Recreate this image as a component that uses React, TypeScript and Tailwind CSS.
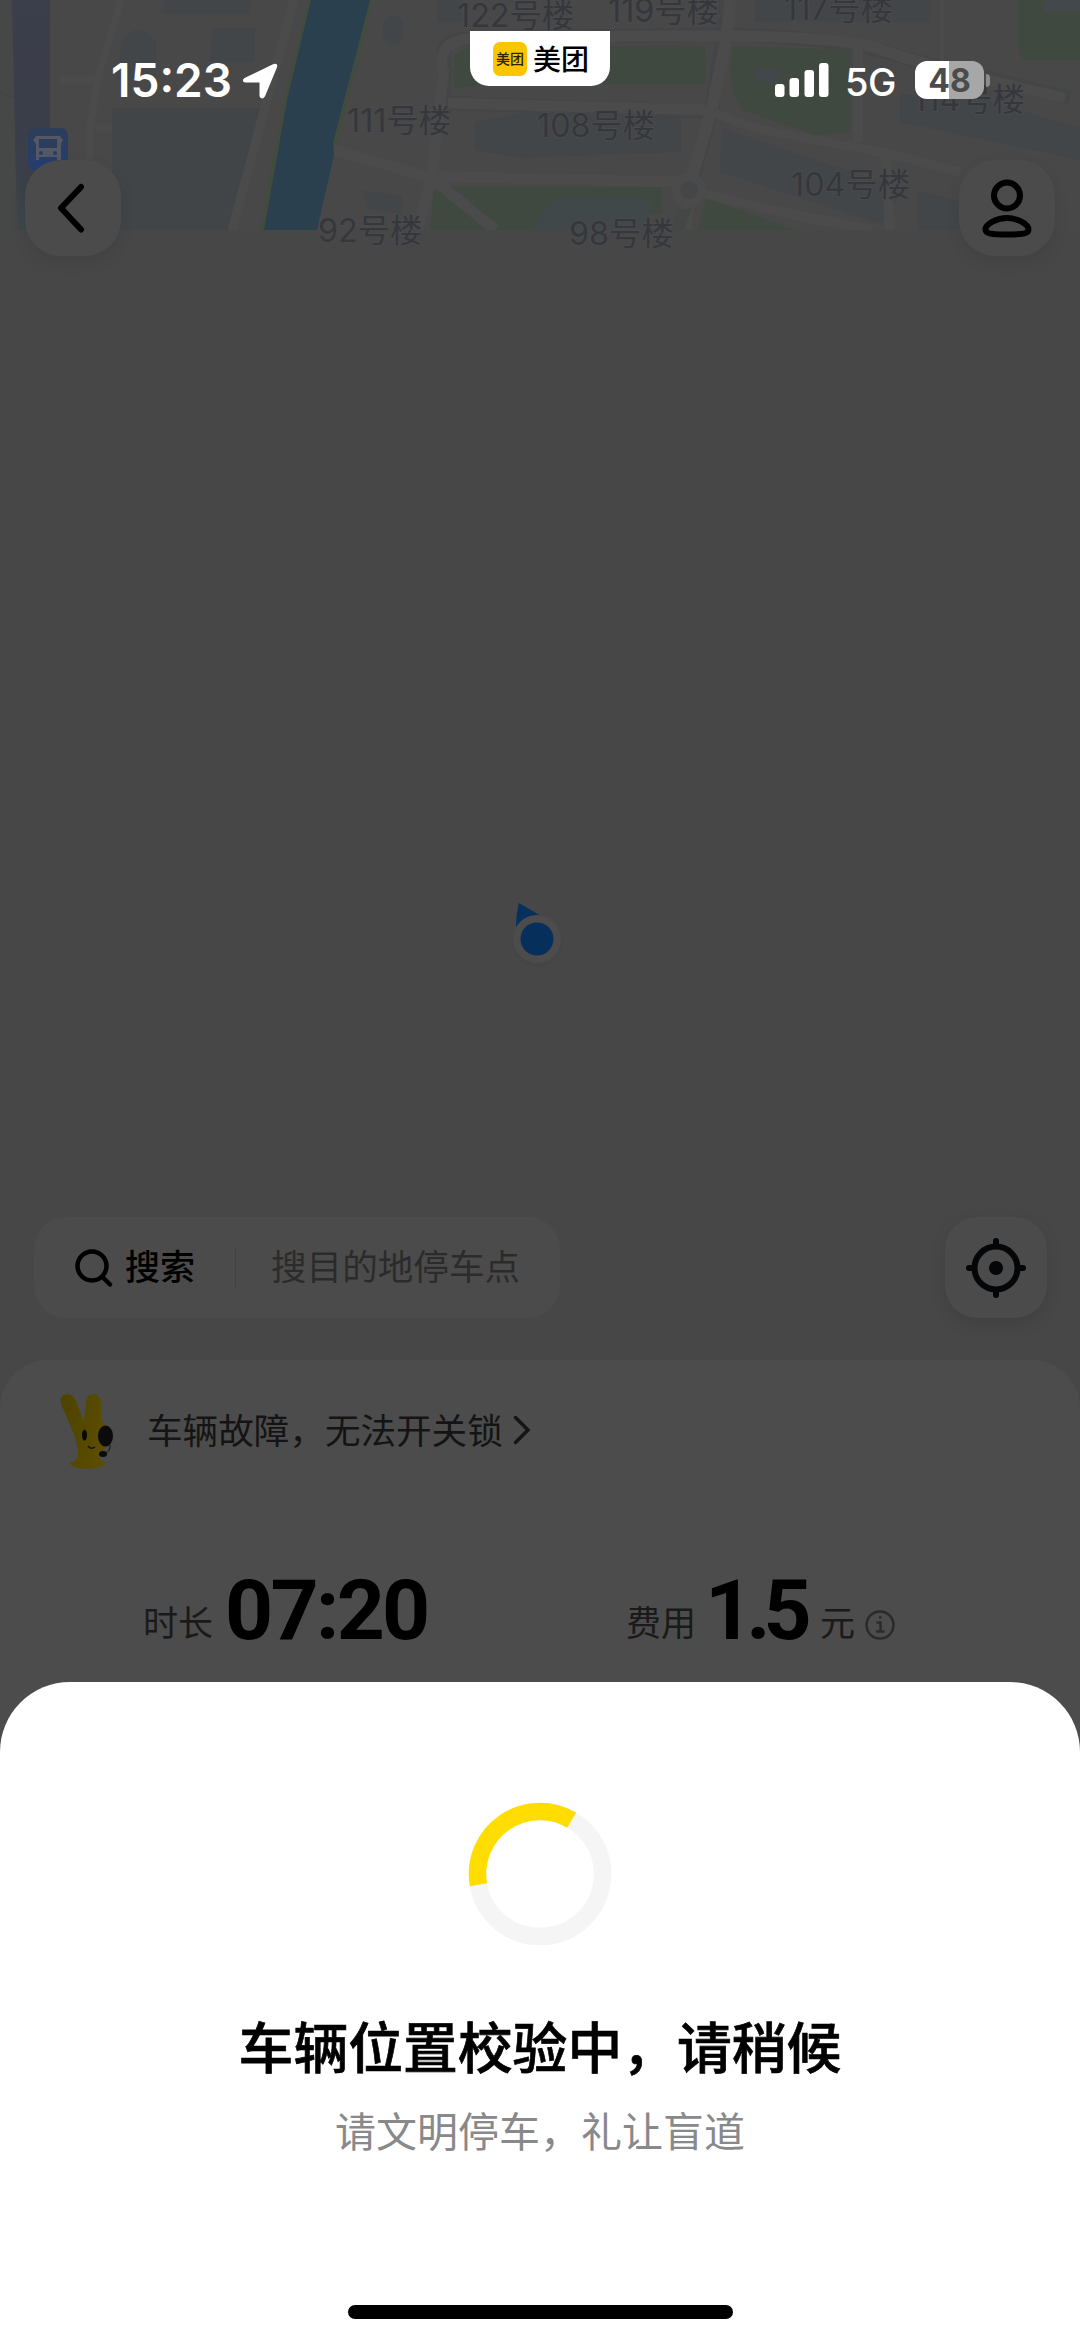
import React from "react";

const mapLabels = [
  { text: "122号楼", x: 457, y: 27 },
  { text: "119号楼", x: 608, y: 22 },
  { text: "117号楼", x: 784, y: 20 },
  { text: "111号楼", x: 347, y: 132 },
  { text: "108号楼", x: 537, y: 137 },
  { text: "114号楼", x: 913, y: 111 },
  { text: "104号楼", x: 791, y: 196 },
  { text: "92号楼", x: 318, y: 242 },
  { text: "98号楼", x: 569, y: 245 },
];

function MapTiles() {
  return (
    <svg className="col-start-1 row-start-1 block" width="1080" height="262" viewBox="0 0 1080 262">
      <defs>
        <clipPath id="tiles">
          <rect width="1080" height="230" />
        </clipPath>
        <linearGradient id="road" x1="0" y1="0" x2="0" y2="1">
          <stop offset="0" stopColor="#3b3e4b" />
          <stop offset="0.75" stopColor="#3b3f49" />
          <stop offset="1" stopColor="#3d4849" />
        </linearGradient>
        <linearGradient id="bus" x1="0" y1="0" x2="0" y2="1">
          <stop offset="0" stopColor="#2d3d5a" />
          <stop offset="1" stopColor="#263e70" />
        </linearGradient>
      </defs>
      <g clipPath="url(#tiles)">
        <rect width="1080" height="230" fill="#484849" />
        <path d="M0 0H12L17 230H0Z" fill="#464847" />
        <path d="M0 92L13 98" stroke="#414242" strokeWidth="1" fill="none" />

        {/* Buildings */}
        <g fill="#434649">
          <path d="M112 108H262L228 230H112Z" fill="#414547" />
          <path d="M122 40Q140 18 156 42V80H116ZM212 28H255V62H210ZM165 0H250V14H160Z" />
          <rect x="383" y="15" width="20" height="30" rx="10" />
          <path d="M437 0H462V22H437ZM475 122L520 113H681V152L520 158L475 150Z" />
          <path d="M362 190L402 196V215L368 208Z" />
          <path d="M722 128L905 190L880 224L720 172Z" />
          <path d="M900 94L985 100L1080 128V160L900 122Z" />
          <path d="M918 190L990 210L985 230H918Z" />
          <path d="M755 0H930V22H755Z" />
        </g>

        {/* Green areas */}
        <g fill="#404940">
          <path d="M454 55L470 46H705V84H490L454 88Z" />
          <path d="M732 46L850 50V132L815 135L742 110Q730 90 730 70Z" />
          <path d="M1018 0H1080V60H1024L1018 52Z" />
          <path d="M434 190H470L520 230H430Z" />
          <path d="M446 187H662V214H640V230H490Z" />
          <path d="M706 198L795 230H698Z" />
        </g>
        <path d="M556 198H650V230H530Z" fill="#41484a" />
        <rect x="755" y="68" width="24" height="14" fill="#42484a" />
        <path d="M1044 0H1080V12H1044Z" fill="#43484a" />

        {/* Road edges */}
        <g fill="none" stroke="#444546" strokeWidth="14">
          <path d="M444 115L444 50Q446 39 466 39L720 34Q850 38 905 58L1070 98" />
          <path d="M450 103L708 112" />
          <path d="M726 0L722 40L712 110L688 195" />
        </g>
        {/* Roads */}
        <g fill="none" stroke="#4b4b4c">
          <path d="M121 0L98 78L90 128V160M58 80H100M96 128H112" strokeWidth="7" />
          <path d="M294 0L232 230" strokeWidth="9" />
          <path d="M334 150L425 176L680 182" strokeWidth="11" />
          <path d="M444 68L432 176L418 230M432 178L495 230" strokeWidth="11" />
          <path d="M442 70V58Q446 40 470 39L650 36H720Q820 36 870 46Q930 68 1065 98" strokeWidth="11" />
          <path d="M448 103L705 110" strokeWidth="11" />
          <path d="M730 0L727 36L712 108L688 190L686 230" strokeWidth="12" />
          <path d="M714 112Q745 128 800 137L885 153L960 172" strokeWidth="9" />
          <path d="M858 42V142" strokeWidth="10" />
          <path d="M885 152L890 230" strokeWidth="10" />
          <path d="M690 190L780 212L872 230" strokeWidth="10" />
          <path d="M942 0V70" strokeWidth="3" />
        </g>
        <circle cx="689" cy="190" r="13" fill="#444647" stroke="#4b4b4c" strokeWidth="8" />
        <path d="M676 210L692 208L684 230H672Z" fill="#454646" />

        <path d="M12 0H50V120L54 230H17Z" fill="url(#road)" />

        {/* River with green banks */}
        <path d="M311 0L287 96L262 230" fill="none" stroke="#424c3e" strokeWidth="5" />
        <path d="M371 0L335 143" fill="none" stroke="#424c3e" strokeWidth="4" />
        <path d="M311 0H370L333 143L334 155L317 230H264L287 100Z" fill="#2b404e" />

        {/* Bus stop */}
        <rect x="28" y="128" width="40" height="42" rx="7" fill="url(#bus)" />
        <path d="M33 140L36 136H60L63 140L61 144V160H57V157H39V160H36V144Z" fill="#535864" />
        <rect x="39" y="139" width="18" height="9" fill="#2b3c5d" />
        <circle cx="41" cy="153" r="2" fill="#2b3c5d" />
        <circle cx="55" cy="153" r="2" fill="#2b3c5d" />
      </g>
      <g fill="#35373c" stroke="#4a4a4b" strokeWidth="2" paintOrder="stroke" fontSize="32.300" fontFamily="Inter, 'Noto Sans CJK SC', sans-serif">
        {mapLabels.map((l) => (
          <text key={l.text} x={l.x} y={l.y}>
            {l.text}
          </text>
        ))}
      </g>
    </svg>
  );
}

function StatusBar() {
  return (
    <div className="h-[160px] pt-[31px] pl-[111px] pr-[90px] flex items-start justify-between text-white font-[Inter,sans-serif]">
      <div className="w-[359px] h-[100px] flex items-start">
        <span className="mt-[20px] w-[124px] text-[46px] leading-[59px] font-semibold whitespace-nowrap">15:23</span>
        <svg className="mt-[32px] ml-[8px]" width="35" height="36" viewBox="0 0 35 36">
          <path
            d="M2 16L31 2Q34 1 33 4L21 33Q19 36 17.500 33V19.500Q17.500 18.500 16.500 18.500H2.500Q-0.500 18 2 16Z"
            fill="white"
            stroke="white"
            strokeWidth="2"
            strokeLinejoin="round"
          />
        </svg>
      </div>

      {/* App pill */}
      <div className="w-[140px] h-[55px] bg-white rounded-b-[19px] flex items-center pl-[23px] gap-[6px] font-['Noto_Sans_CJK_SC',sans-serif]">
        <span className="w-[34px] h-[34px] rounded-[7px] bg-[#fdc400] text-[#2a2200] text-[14px] leading-[33px] text-center font-medium">
          美团
        </span>
        <span className="text-[28px] leading-[34px] font-medium text-black whitespace-nowrap -mt-px">美团</span>
      </div>

      <div className="w-[380px] pl-[165px] flex items-start">
        <svg className="mt-[32px] shrink-0" width="54" height="34" viewBox="0 0 54 34" fill="white">
          <rect x="0" y="21" width="9.500" height="13" rx="3" />
          <rect x="14.500" y="15" width="9.500" height="19" rx="3" />
          <rect x="29.500" y="7" width="9.500" height="27" rx="3" />
          <rect x="44" y="0" width="9.500" height="34" rx="3" />
        </svg>
        <span className="mt-[28px] ml-[16px] w-[53px] text-[38px] leading-[46px] font-medium tracking-[-0.500px] whitespace-nowrap">5G</span>
        <div className="mt-[30px] ml-[17px] w-[69px] h-[38px] rounded-[12px] bg-linear-to-r from-white from-[49%] to-[#a7a7a7] to-[49%] text-center text-[32px] leading-[39px] font-bold text-[#4b4b4b]">
          48
        </div>
        <div className="mt-[43px] ml-[2px] w-[4px] h-[13px] rounded-r-full bg-[#8c8c8c]" />
      </div>
    </div>
  );
}

function Mascot() {
  return (
    <svg width="54" height="75" viewBox="0 0 54 75">
      <defs>
        <linearGradient id="skin" x1="0" y1="0" x2="1" y2="0.3">
          <stop offset="0" stopColor="#4d4300" />
          <stop offset="1" stopColor="#5b4d00" />
        </linearGradient>
      </defs>
      <path
        d="M1 10Q-1 1 7 0Q13 0 16 7L24 28L26 7Q27 0 34 0Q41 1 41 9L41 26Q49 32 47 46Q46 56 39 61Q39 66 46 69Q44 74 27 75Q11 74 10 69Q18 67 18 62Q18 50 13 38Z"
        fill="url(#skin)"
      />
      <ellipse cx="24.500" cy="41" rx="2.500" ry="5.500" fill="#080800" />
      <ellipse cx="45.500" cy="42" rx="7.500" ry="10.500" fill="#0b0b0b" />
      <path d="M28 52Q31 56 35 53" fill="none" stroke="#171300" strokeWidth="1.500" />
      <path d="M50 51Q51 57 44 60" fill="none" stroke="#111" strokeWidth="1" />
      <ellipse cx="43" cy="60" rx="4" ry="3" fill="#0b0b0b" />
    </svg>
  );
}

export default function App() {
  return (
    <div className="w-[1080px] h-[2341px] overflow-hidden grid bg-[#474747] font-['Noto_Sans_CJK_SC',sans-serif]">
      <MapTiles />

      <div className="col-start-1 row-start-1 flex flex-col z-10">
        <StatusBar />

        {/* Top buttons */}
        <div className="h-[96px] shrink-0 px-[25px] flex justify-between">
          <button className="w-[96px] h-[96px] rounded-[36px] bg-[#4b4b4b] shadow-[0_6px_16px_rgba(0,0,0,0.08)] flex items-center justify-center">
            <svg width="96" height="96" viewBox="0 0 96 96" fill="none" stroke="black" strokeWidth="6" strokeLinecap="round" strokeLinejoin="round">
              <path d="M56 27L36 48L56 69.500" />
            </svg>
          </button>
          <button className="w-[96px] h-[96px] rounded-[36px] bg-[#4b4b4b] shadow-[0_6px_16px_rgba(0,0,0,0.08)] flex items-center justify-center">
            <svg width="96" height="96" viewBox="0 0 96 96" fill="none" stroke="black" strokeWidth="6">
              <circle cx="48" cy="35.500" r="13" />
              <path d="M48 58C58 58 69.500 64 69.500 69.500C69.500 73.500 63 74.500 48 74.500C33 74.500 26.500 73.500 26.500 69.500C26.500 64 38 58 48 58Z" />
            </svg>
          </button>
        </div>

        {/* Current location */}
        <div className="h-[961px] shrink-0 pt-[639px] pl-[505px]">
          <svg width="64" height="76" viewBox="0 0 64 76">
            <circle cx="32" cy="47" r="25" fill="#434343" opacity="0.5" />
            <path d="M14 8L36 21L11 34Q11 18 14 8Z" fill="#09305c" />
            <circle cx="32" cy="44" r="24" fill="#4c4c4c" />
            <circle cx="32" cy="44" r="16.500" fill="#062f5c" />
          </svg>
        </div>

        {/* Search row */}
        <div className="h-[143px] shrink-0 pl-[34px] pr-[33px] flex justify-between items-start">
          <div className="w-[526px] h-[101px] rounded-[32px] bg-[#4b4b4b] flex items-center pl-[41px]">
            <svg width="38" height="38" viewBox="0 0 38 38" fill="none" stroke="black" strokeWidth="4.500" strokeLinecap="round">
              <circle cx="17" cy="17" r="14.500" />
              <path d="M27.500 28L35 35.500" />
            </svg>
            <span className="ml-[12px] -mt-[4px] w-[72px] text-[35px] font-medium text-black whitespace-nowrap">搜索</span>
            <span className="ml-[38px] w-px h-[40px] bg-[#434343]" />
            <span className="ml-[35px] -mt-[5px] text-[35.600px] text-[#2b2b2c] whitespace-nowrap">搜目的地停车点</span>
          </div>
          <button className="w-[102px] h-[101px] rounded-[32px] bg-[#4b4b4b] shadow-[0_6px_16px_rgba(0,0,0,0.1)] flex items-center justify-center">
            <svg width="62" height="62" viewBox="0 0 62 62" fill="none" stroke="#050607" strokeWidth="6" strokeLinecap="round">
              <circle cx="31" cy="31" r="21.500" />
              <path d="M31 4V9M31 53V58M4 31H9M53 31H58" />
              <circle cx="31" cy="31" r="7" fill="#050607" stroke="none" />
            </svg>
          </button>
        </div>

        {/* Ride card */}
        <div className="h-[393px] shrink-0 rounded-t-[48px] bg-[#4c4c4c]">
          <div className="pt-[34px] pl-[60px] flex items-center">
            <Mascot />
            <span className="ml-[33px] -mt-[6px] text-[35.600px] leading-[52px] text-[#141414] whitespace-nowrap">
              车辆故障，无法开关锁
            </span>
            <svg className="ml-[10px] -mt-[4px]" width="18" height="30" viewBox="0 0 18 30" fill="none" stroke="#151515" strokeWidth="3.500" strokeLinecap="round">
              <path d="M2.500 2.500L15 15L2.500 27.500" />
            </svg>
          </div>

          <div className="mt-[94px] flex items-baseline text-[#1a1a1a] text-[35px] leading-[96px] whitespace-nowrap">
            <div className="w-[482px] pl-[143px] flex items-baseline">
              <span className="w-[82px] relative -top-[3px]">时长</span>
              <span className="font-[Roboto,sans-serif] font-bold text-[84px] tracking-[-2.800px] text-black">07:20</span>
            </div>
            <div className="pl-[144px] flex items-baseline">
              <span className="w-[79px] relative -top-[3px]">费用</span>
              <span className="w-[115px] font-[Roboto,sans-serif] font-bold text-[84px] tracking-[-7px] text-black">1.5</span>
              <span className="w-[44px] relative -top-[3px]">元</span>
              <svg className="relative top-[2px]" width="32" height="32" viewBox="0 0 32 32" fill="none" stroke="#2b2b2b" strokeWidth="2.500">
                <circle cx="16" cy="16" r="13.500" />
                <path d="M12.500 13.500H16.500V22.500M12 22.500H20.500M15 8.500H17.500" />
              </svg>
            </div>
          </div>
        </div>

        {/* Parking check sheet */}
        <div className="-mt-[71px] h-[659px] shrink-0 rounded-t-[70px] bg-white flex flex-col items-center">
          <svg className="mt-[120px] shrink-0" width="144" height="144" viewBox="0 0 144 144" fill="none" strokeWidth="17.500">
            <circle cx="72" cy="72" r="62.500" stroke="#f5f5f5" />
            <path d="M10.450 82.850A62.500 62.500 0 0 1 103.700 18.150" stroke="#ffdd00" />
          </svg>
          <h1 className="mt-[58px] text-[54.800px] leading-[80px] font-medium text-black whitespace-nowrap [-webkit-text-stroke:0.7px_black]">
            车辆位置校验中，请稍候
          </h1>
          <p className="mt-[15px] text-[41px] leading-[60px] text-[#88898b] whitespace-nowrap">
            请文明停车，礼让盲道
          </p>
          <div className="mt-auto mb-[22px] w-[385px] h-[14px] shrink-0 rounded-full bg-black" />
        </div>
      </div>
    </div>
  );
}
